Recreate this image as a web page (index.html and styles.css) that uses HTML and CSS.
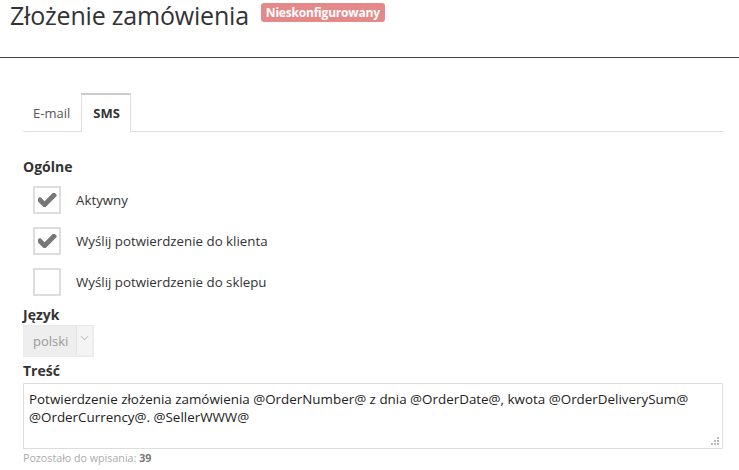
FILE: index.html
```html
<!DOCTYPE html>
<html lang="pl">
<head>
<meta charset="utf-8">
<title>Złożenie zamówienia</title>
<link rel="stylesheet" href="styles.css">
</head>
<body>
<header class="page-header">
  <h1 class="page-title">Złożenie zamówienia</h1>
  <span class="badge">Nieskonfigurowany</span>
</header>

<nav class="tabs">
  <a class="tab">E-mail</a>
  <a class="tab tab-active">SMS</a>
</nav>

<main class="form">
  <div class="section-title">Ogólne</div>
  <div class="checks">
    <label class="check-row">
      <span class="box"><svg class="tick" viewBox="200 380 1490 1100"><path d="M1671 566q0 40-28 68l-724 724-136 136q-28 28-68 28t-68-28l-136-136-362-362q-28-28-28-68t28-68l136-136q28-28 68-28t68 28l294 295 656-657q28-28 68-28t68 28l136 136q28 28 28 68z"/></svg></span>
      <span class="check-label">Aktywny</span>
    </label>
    <label class="check-row">
      <span class="box"><svg class="tick" viewBox="200 380 1490 1100"><path d="M1671 566q0 40-28 68l-724 724-136 136q-28 28-68 28t-68-28l-136-136-362-362q-28-28-28-68t28-68l136-136q28-28 68-28t68 28l294 295 656-657q28-28 68-28t68 28l136 136q28 28 28 68z"/></svg></span>
      <span class="check-label">Wyślij potwierdzenie do klienta</span>
    </label>
    <label class="check-row">
      <span class="box"></span>
      <span class="check-label">Wyślij potwierdzenie do sklepu</span>
    </label>
  </div>

  <div class="field-label lang-label">Język</div>
  <div class="select">
    <span class="select-value">polski</span>
    <span class="select-arrow"><svg viewBox="0 0 10 6" width="9" height="6"><path d="M1 1l4 4 4-4" fill="none" stroke="#c4c4c4" stroke-width="1.2"/></svg></span>
  </div>

  <div class="field-label body-label">Treść</div>
  <div class="textarea">Potwierdzenie złożenia zamówienia @OrderNumber@ z dnia @OrderDate@, kwota @OrderDeliverySum@ @OrderCurrency@. @SellerWWW@<svg class="grip" viewBox="0 0 8 8" width="8" height="8"><rect x="6" y="0" width="2" height="2"/><rect x="3" y="3" width="2" height="2"/><rect x="6" y="3" width="2" height="2"/><rect x="0" y="6" width="2" height="2"/><rect x="3" y="6" width="2" height="2"/><rect x="6" y="6" width="2" height="2"/></svg></div>
  <div class="counter">Pozostało do wpisania: <b>39</b></div>
</main>
</body>
</html>
```

FILE: styles.css
```css
html, body {
  margin: 0;
  padding: 0;
  background: #fff;
}

body {
  font-family: "Open Sans", "Liberation Sans", sans-serif;
  font-size: 13px;
  color: #333;
}

.page-header {
  display: flex;
  align-items: flex-start;
  height: 57px;
  padding-left: 10px;
  border-bottom: 1px solid #444;
}

.page-title {
  margin: 0;
  padding-top: 2px;
  font-size: 25px;
  font-weight: 400;
  line-height: 26px;
  letter-spacing: -0.2px;
  color: #333;
}

.badge {
  margin-left: 12px;
  margin-top: 3px;
  padding: 0 5px;
  height: 19px;
  line-height: 19px;
  font-size: 12px;
  font-weight: 700;
  color: #fff;
  background: #e4898a;
  border-radius: 3px;
  letter-spacing: -0.2px;
}

.tabs {
  display: flex;
  margin: 35px 16px 0 23px;
  border-bottom: 1px solid #ddd;
}

.tab {
  display: block;
  height: 38px;
  line-height: 38px;
  padding: 0 9px;
  margin-right: 1px;
  border: 1px solid transparent;
  border-bottom: 0;
  color: #555;
  box-sizing: border-box;
}

.tab-active {
  padding: 0 10px 0 11px;
  border-color: #ddd;
  border-top: 2px solid #ccc;
  line-height: 36px;
  font-weight: 700;
  color: #333;
  background: #fff;
  margin-bottom: -1px;
  height: 39px;
}

.form {
  padding: 0 16px 0 23px;
}

.section-title,
.field-label {
  font-weight: 700;
  font-size: 14px;
  line-height: 20px;
  color: #333;
}

.section-title {
  margin-top: 25px;
}

.checks {
  display: flex;
  flex-direction: column;
  gap: 13px;
  margin-top: 9px;
  padding-left: 10px;
}

.check-row {
  display: flex;
  align-items: center;
}

.box {
  width: 28px;
  height: 28px;
  box-sizing: border-box;
  border: 2px solid #ddd;
  display: flex;
  align-items: center;
  justify-content: center;
}

.tick {
  width: 19px;
  height: 14px;
  fill: #777;
}

.check-label {
  margin-left: 15px;
  font-size: 13.3px;
}

.lang-label {
  margin-top: 9px;
}

.select {
  display: flex;
  width: 71px;
  height: 32px;
  box-sizing: border-box;
  background: #eee;
  border: 1px solid #eaeaea;
}

.select-value {
  flex: 1;
  padding-left: 9px;
  line-height: 30px;
  font-size: 13px;
  color: #999;
}

.select-arrow {
  width: 16px;
  margin: 0 1px 1px 0;
  background: #f4f4f4;
  border-left: 1px solid #e2e2e2;
  display: flex;
  justify-content: center;
  padding-top: 9px;
  box-sizing: border-box;
}

.body-label {
  margin-top: 4px;
}

.textarea {
  position: relative;
  margin-top: 2px;
  height: 66px;
  box-sizing: border-box;
  border: 1px solid #ddd;
  padding: 6px 5px;
  font-size: 13.4px;
  line-height: 18px;
  color: #222;
}

.grip {
  position: absolute;
  right: 3px;
  bottom: 3px;
  fill: #bbb;
}

.counter {
  margin-top: 2px;
  font-size: 10.7px;
  line-height: 15px;
  color: #aaa;
}

.counter b {
  color: #777;
}
```
